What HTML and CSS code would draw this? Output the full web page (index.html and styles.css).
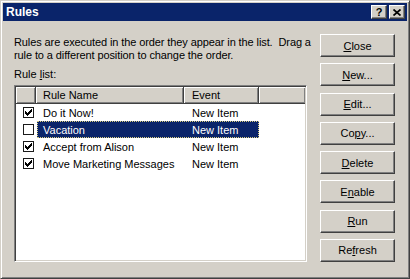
FILE: index.html
```html
<!DOCTYPE html>
<html lang="en">

<head>
    <meta charset="UTF-8">
    <title>Rules</title>
    <link rel="stylesheet" href="styles.css">
</head>

<body>

    <div class="window">
        <div class="titlebar">
            <span class="title">Rules</span>
            <div class="caption-btns">
                <span class="cbtn cbtn-help">?</span>
                <span class="cbtn">
                    <svg width="8" height="7" viewBox="0 0 8 7">
                        <path d="M0.5 0.5 L7.5 6.5 M7.5 0.5 L0.5 6.5" stroke="#000" stroke-width="1.7" fill="none"/>
                    </svg>
                </span>
            </div>
        </div>

        <div class="content">
            <div class="main">
                <p class="intro">Rules are executed in the order they appear in the list.&nbsp; Drag a<br>rule to a different position to change the order.</p>
                <div class="label">Rule <u>l</u>ist:</div>

                <div class="listbox">
                    <div class="header">
                        <div class="hcell hcell-check"></div>
                        <div class="hcell hcell-name">Rule Name</div>
                        <div class="hcell hcell-event">Event</div>
                        <div class="hcell hcell-fill"></div>
                    </div>

                    <div class="row">
                        <div class="check-cell"><span class="checkbox checked"></span></div>
                        <div class="item">
                            <span class="name">Do it Now!</span>
                            <span class="event">New Item</span>
                        </div>
                    </div>
                    <div class="row">
                        <div class="check-cell"><span class="checkbox"></span></div>
                        <div class="item selected">
                            <span class="name">Vacation</span>
                            <span class="event">New Item</span>
                        </div>
                    </div>
                    <div class="row">
                        <div class="check-cell"><span class="checkbox checked"></span></div>
                        <div class="item">
                            <span class="name">Accept from Alison</span>
                            <span class="event">New Item</span>
                        </div>
                    </div>
                    <div class="row">
                        <div class="check-cell"><span class="checkbox checked"></span></div>
                        <div class="item">
                            <span class="name">Move Marketing Messages</span>
                            <span class="event">New Item</span>
                        </div>
                    </div>
                </div>
            </div>

            <!-- command buttons -->
            <div class="buttons">
                <button><u>C</u>lose</button>
                <button><u>N</u>ew...</button>
                <button><u>E</u>dit...</button>
                <button>Co<u>p</u>y...</button>
                <button><u>D</u>elete</button>
                <button>E<u>n</u>able</button>
                <button><u>R</u>un</button>
                <button>Re<u>f</u>resh</button>
            </div>
        </div>
    </div>

</body>

</html>
```

FILE: styles.css
```css
* {
    box-sizing: border-box;
}

body {
    margin: 0;
    padding: 0;
    background-color: #d4d0c8;
    font-family: "Liberation Sans", Arial, sans-serif;
    font-size: 11px;
    color: #000;
}

.window {
    width: 410px;
    height: 279px;
    background-color: #d4d0c8;
    border: 1px solid;
    border-color: #d4d0c8 #404040 #404040 #d4d0c8;
    box-shadow: inset 1px 1px #fff, inset -1px -1px #808080;
    padding: 2px;
    display: flex;
    flex-direction: column;
}

.titlebar {
    height: 18px;
    background-color: #0a246a;
    color: #fff;
    display: flex;
    justify-content: space-between;
    align-items: center;
    padding: 0 2px 0 3px;
}

.title {
    font-weight: bold;
    font-size: 12px;
}

.caption-btns {
    display: flex;
    gap: 2px;
}

.cbtn {
    width: 16px;
    height: 14px;
    background-color: #d4d0c8;
    border: 1px solid;
    border-color: #fff #404040 #404040 #fff;
    box-shadow: inset -1px -1px #808080;
    display: flex;
    justify-content: center;
    align-items: center;
    color: #000;
}

.cbtn-help {
    font-weight: bold;
    font-size: 11px;
    line-height: 12px;
}

.content {
    display: flex;
    gap: 13px;
    padding: 13px 12px 0 11px;
}

.main {
    width: 293px;
}

.intro {
    width: 305px;
    margin: 2px 0 0;
    line-height: 13px;
    white-space: nowrap;
    letter-spacing: -0.1px;
}

.label {
    margin-top: 6px;
    line-height: 13px;
}

/* list view */
.listbox {
    margin-top: 4px;
    height: 177px;
    background-color: #fff;
    border: 1px solid;
    border-color: #808080 #fff #fff #808080;
    box-shadow: inset 1px 1px #404040, inset -1px -1px #d4d0c8;
    padding: 1px;
}

.header {
    display: flex;
    height: 17px;
}

.hcell {
    height: 17px;
    background-color: #d4d0c8;
    border-right: 1px solid #404040;
    border-bottom: 1px solid #404040;
    box-shadow: inset 1px 1px #fff, inset -1px -1px #808080;
    line-height: 16px;
    white-space: nowrap;
}

.hcell-check {
    width: 20px;
}

.hcell-name {
    width: 148px;
    padding-left: 7px;
}

.hcell-event {
    width: 75px;
    padding-left: 8px;
}

.hcell-fill {
    flex: 1;
    border-right: none;
}

.row {
    display: flex;
    height: 17px;
    align-items: center;
}

.check-cell {
    width: 20px;
    padding-left: 7px;
    display: flex;
    align-items: center;
}

.checkbox {
    width: 11px;
    height: 11px;
    border: 1px solid #1a1a1a;
    background-color: #fff;
}

.checkbox.checked {
    background-image: url("data:image/svg+xml;utf8,<svg xmlns='http://www.w3.org/2000/svg' width='9' height='9' viewBox='0 0 9 9'><path d='M1 3h1v3H1z M2 4h1v3H2z M3 5h1v3H3z M4 4h1v3H4z M5 3h1v3H5z M6 2h1v3H6z M7 1h1v3H7z' fill='%23000'/></svg>");
    background-repeat: no-repeat;
}

.item {
    display: flex;
    height: 17px;
    align-items: center;
    margin-left: 1px;
    white-space: nowrap;
}

.item .name {
    width: 147px;
    padding-left: 6px;
}

.item .event {
    width: 75px;
    padding-left: 8px;
}

.item.selected {
    background-color: #0a246a;
    color: #fff;
    outline: 1px dotted #d8cc80;
    outline-offset: -1px;
}

/* buttons */
.buttons {
    width: 75px;
    height: 228px;
    display: flex;
    flex-direction: column;
    justify-content: space-between;
}

button {
    height: 23px;
    width: 75px;
    padding: 0;
    background-color: #d4d0c8;
    border: 1px solid;
    border-color: #fff #404040 #404040 #fff;
    box-shadow: inset -1px -1px #808080;
    font-family: "Liberation Sans", Arial, sans-serif;
    font-size: 11px;
    color: #000;
}
```
